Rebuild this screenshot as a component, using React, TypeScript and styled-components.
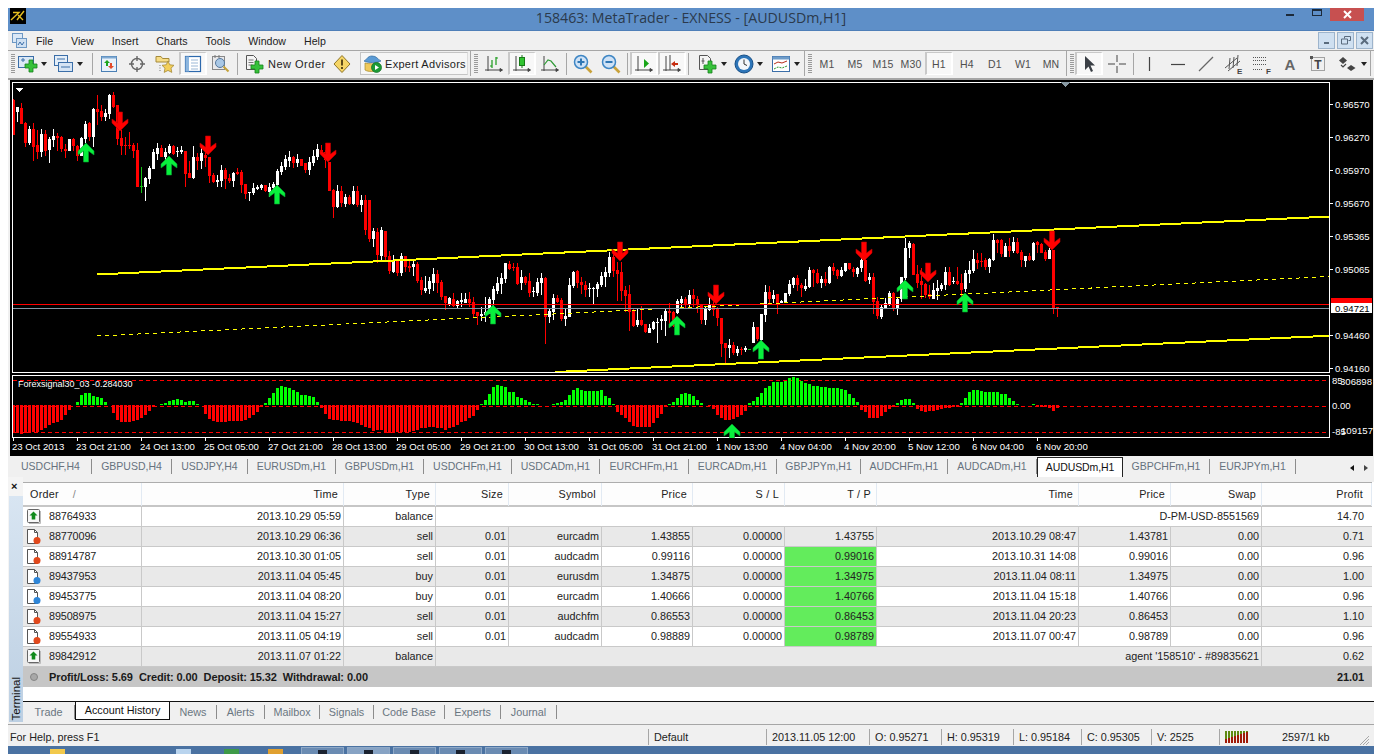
import { ReactNode } from 'react'
import styled, { createGlobalStyle } from 'styled-components'

const FONT = '"Liberation Sans", Arial, sans-serif'

const GlobalStyle = createGlobalStyle`
  html, body {
    margin: 0;
    padding: 0;
    background: #fff;
    overflow: hidden;
  }
  * {
    box-sizing: border-box;
  }
`

const Window = styled.div`
  width: 1366px;
  height: 746px;
  margin: 8px 0 0 8px;
  display: flex;
  flex-direction: column;
  background: #f0f0f0;
  font-family: ${FONT};
  font-size: 10.8px;
  color: #222;
  overflow: hidden;
`

const TitleBar = styled.div`
  height: 23px;
  flex: none;
  display: grid;
  grid-template-columns: 1fr auto 1fr;
  background: #5e8fc8;
  border-bottom: 1px solid #4f7fb8;
`

const TitleLogo = styled.svg`
  width: 16px;
  height: 16px;
  margin-left: 2px;
  display: block;
`

const TitleText = styled.div`
  font-family: 'Open Sans', sans-serif;
  font-size: 14.2px;
  line-height: 20px;
  color: #2b3a4c;
  white-space: nowrap;
`

const WindowButtons = styled.div`
  display: flex;
  justify-content: flex-end;
  padding-right: 10px;
`

const WindowButton = styled.div<{ $w: number; $close?: boolean }>`
  width: ${({ $w }) => $w}px;
  height: 13px;
  display: flex;
  align-items: center;
  justify-content: center;
  color: #fff;
  background: ${({ $close }) => ($close ? '#c75050' : 'transparent')};
`

const MinMark = styled.div`
  width: 8px;
  height: 2px;
  margin-top: 1px;
  background: #1c2a3a;
`

const MaxMark = styled.div`
  width: 10px;
  height: 7px;
  margin-top: -5px;
  border: 1px solid #1c2a3a;
  border-top-width: 2px;
`

const MenuBar = styled.div`
  height: 20px;
  flex: none;
  display: flex;
  align-items: center;
  padding-left: 4px;
  border-bottom: 1px solid #a6a6a6;
`

const MenuItem = styled.div`
  padding: 0 9px;
  font-size: 10.6px;
`

const MdiButtons = styled.div`
  display: flex;
  gap: 2px;
  margin-left: auto;
  padding-right: 1px;
`

const MdiButton = styled.div`
  width: 17px;
  height: 17px;
  display: flex;
  align-items: center;
  justify-content: center;
  background: #cfe0f1;
  border: 1px solid #9db4cc;
`

const Toolbar = styled.div`
  height: 29px;
  flex: none;
  display: flex;
  align-items: center;
  padding: 0 0 2px 3px;
  border-bottom: 2px solid #a6a6a6;
`

const Grip = styled.div<{ $ml?: number; $mr?: number }>`
  width: 4px;
  height: 20px;
  flex: none;
  margin: 0 ${({ $mr }) => $mr ?? 2}px 0 ${({ $ml }) => $ml ?? 3}px;
  background: repeating-linear-gradient(#9a9a9a 0 1px, transparent 1px 2px);
`

const ToolSep = styled.div`
  width: 1px;
  height: 22px;
  flex: none;
  margin: 0 2px;
  background: #a6a6a6;
`

const GroupEnd = styled.div<{ $ml?: number }>`
  width: 1px;
  height: 25px;
  flex: none;
  margin-left: ${({ $ml }) => $ml ?? 2}px;
  background: #a6a6a6;
`

const ToolButton = styled.div<{ $w?: number; $active?: boolean; $pl?: number; $ml?: number }>`
  width: ${({ $w }) => $w ?? 28}px;
  height: 23px;
  flex: none;
  display: flex;
  align-items: center;
  justify-content: ${({ $pl }) => ($pl === undefined ? 'center' : 'flex-start')};
  gap: 3px;
  padding-left: ${({ $pl }) => $pl ?? 0}px;
  margin-left: ${({ $ml }) => $ml ?? 0}px;
  color: #3a3a3a;
  background-clip: padding-box;
  background-color: ${({ $active }) => ($active ? '#f8f8f8' : 'transparent')};
  border-style: solid;
  border-width: ${({ $active }) => ($active ? '1px 2px' : '0')};
  border-color: ${({ $active }) => ($active ? '#c9c9c9 #fff #fff #c9c9c9' : 'transparent')};
`

const ToolLabel = styled.span<{ $spacing: number }>`
  font-size: 11px;
  letter-spacing: ${({ $spacing }) => $spacing}px;
  color: #1e1e1e;
  white-space: nowrap;
`

const BoxedButton = styled(ToolButton)`
  gap: 2px;
  background-color: #f6f6f6;
  border: 1px solid #c4c4c4;
  border-right-color: #dcdcdc;
`

const Timeframe = styled(ToolButton)`
  font-size: 10.5px;
  letter-spacing: 0.2px;
  color: #4f4f4f;
`

const Caret = styled.span`
  width: 0;
  height: 0;
  flex: none;
  border-left: 3.5px solid transparent;
  border-right: 3.5px solid transparent;
  border-top: 4px solid #222;
`

const Icon = styled.svg`
  width: 20px;
  height: 20px;
  flex: none;
  display: block;
  overflow: visible;
`

const ChartArea = styled.div`
  height: 376px;
  flex: none;
  padding-left: 2px;
  background: #f0f0f0;
`

const ChartSvg = styled.svg`
  display: block;
  width: 1363px;
  height: 376px;
  background: #000;
  shape-rendering: crispEdges;
`

const AxisText = styled.text<{ $size?: number; $dark?: boolean }>`
  font-family: ${FONT};
  font-size: ${({ $size }) => $size ?? 9.6}px;
  fill: ${({ $dark }) => ($dark ? '#000' : '#fff')};
  shape-rendering: auto;
`

const SymbolTabs = styled.div`
  height: 21px;
  flex: none;
  display: flex;
  align-items: flex-end;
  padding-left: 2px;
`

const SymbolTab = styled.div<{ $w: number; $active?: boolean }>`
  width: ${({ $w }) => $w}px;
  flex: none;
  height: ${({ $active }) => ($active ? 20 : 15)}px;
  margin-bottom: ${({ $active }) => ($active ? 0 : 3)}px;
  line-height: ${({ $active }) => ($active ? 18 : 15)}px;
  font-size: 10.5px;
  text-align: center;
  letter-spacing: ${({ $active }) => ($active ? '-0.1px' : '0')};
  color: ${({ $active }) => ($active ? '#111' : '#66727e')};
  background: ${({ $active }) => ($active ? '#fff' : 'transparent')};
  border: ${({ $active }) => ($active ? '1px solid #222' : 'none')};
  border-bottom: none;
  border-right: ${({ $active }) => ($active ? '1px solid #222' : '1px solid #8c8c8c')};
`

const ScrollArrows = styled.div`
  margin-left: auto;
  display: flex;
  gap: 10px;
  padding: 0 6px 6px 0;
  align-self: flex-end;
`

const ArrowMark = styled.span<{ $right?: boolean }>`
  width: 0;
  height: 0;
  border-top: 3.5px solid transparent;
  border-bottom: 3.5px solid transparent;
  border-left: ${({ $right }) => ($right ? '4px solid #444' : 'none')};
  border-right: ${({ $right }) => ($right ? 'none' : '4px solid #111')};
`

const Terminal = styled.div`
  flex: 1;
  min-height: 0;
  display: flex;
  background: #fff;
`

const TermSide = styled.div`
  width: 15px;
  flex: none;
  display: flex;
  flex-direction: column;
  background: #f4f4f4;
`

const TermClose = styled.div`
  height: 19px;
  flex: none;
  padding: 3px 0 0 3px;
  font-size: 11px;
  font-weight: bold;
  line-height: 12px;
  color: #111;
`

const TermStrip = styled.div`
  flex: 1;
  margin-left: 1px;
  display: flex;
  align-items: flex-end;
  justify-content: center;
  background: linear-gradient(#d8e5f2, #bccfe2);
`

const TermLabel = styled.div`
  writing-mode: vertical-rl;
  transform: rotate(180deg);
  font-size: 11.5px;
  line-height: 14px;
  padding-top: 2px;
  color: #111;
`

const TermMain = styled.div`
  flex: 1;
  min-width: 0;
  display: flex;
  flex-direction: column;
  padding-top: 5px;
  background: linear-gradient(#f0f0f0 0 5px, #fff 5px);
`

const COLUMNS = '119px 202px 92px 73px 93px 91px 92px 92px 202px 92px 91px 110px'

const HeaderRow = styled.div`
  height: 25px;
  width: 1349px;
  flex: none;
  display: grid;
  grid-template-columns: ${COLUMNS};
  background: #fdfdfd;
  border-top: 1px solid #adadad;
  border-bottom: 2px solid #c6c6c6;
`

const HeaderCell = styled.div<{ $last?: boolean }>`
  text-align: right;
  line-height: 23px;
  letter-spacing: 0.25px;
  padding-right: ${({ $last }) => ($last ? 8 : 5)}px;
  border-right: 1px solid #e2eaf3;
`

const HeaderOrder = styled(HeaderCell)`
  display: flex;
  gap: 14px;
  padding-left: 7px;
  text-align: left;
`

const SortMark = styled.span`
  color: #888;
`

const Row = styled.div<{ $alt?: boolean }>`
  height: 20px;
  width: 1349px;
  flex: none;
  display: grid;
  grid-template-columns: ${COLUMNS};
  background: ${({ $alt }) => ($alt ? '#e9e9e9' : '#fff')};
  border-bottom: 1px solid #c9c9c9;
`

const Cell = styled.div<{ $span?: number; $hit?: boolean; $last?: boolean }>`
  grid-column: span ${({ $span }) => $span ?? 1};
  text-align: right;
  line-height: 19px;
  white-space: nowrap;
  padding-right: ${({ $last }) => ($last ? 8 : 2)}px;
  background: ${({ $hit }) => ($hit ? '#63ec5c' : 'transparent')};
  border-right: ${({ $last }) => ($last ? 'none' : '1px solid #c9c9c9')};
`

const OrderCell = styled(Cell)`
  display: flex;
  align-items: center;
  gap: 8px;
  padding-left: 3px;
  letter-spacing: -0.1px;
`

const RowIcon = styled.svg`
  width: 15px;
  height: 17px;
  flex: none;
  display: block;
`

const Summary = styled.div`
  height: 20px;
  width: 1349px;
  flex: none;
  display: flex;
  align-items: center;
  padding: 0 8px 0 7px;
  background: #c6c6c6;
  font-size: 11px;
  font-weight: bold;
  color: #1a1a1a;
  letter-spacing: -0.1px;
`

const SummaryDot = styled.span`
  width: 8px;
  height: 8px;
  margin-right: 11px;
  border-radius: 50%;
  background: #a8a8a8;
  border: 1px solid #858585;
`

const SummaryItem = styled.span`
  margin-right: 6px;
`

const SummaryTotal = styled.span`
  margin-left: auto;
`

const Blank = styled.div`
  flex: 1;
  background: #fff;
`

const BottomTabs = styled.div`
  height: 21px;
  flex: none;
  display: flex;
  background: #f0f0f0;
  border-top: 1px solid #111;
`

const BottomTab = styled.div<{ $w: number; $active?: boolean }>`
  width: ${({ $w }) => $w}px;
  flex: none;
  height: ${({ $active }) => ($active ? 18 : 14)}px;
  margin-top: ${({ $active }) => ($active ? 0 : 3)}px;
  line-height: ${({ $active }) => ($active ? 16 : 14)}px;
  text-align: center;
  color: ${({ $active }) => ($active ? '#111' : '#6a7681')};
  background: ${({ $active }) => ($active ? '#fff' : 'transparent')};
  border-right: ${({ $active }) => ($active ? '1px solid #111' : '1px solid #8c8c8c')};
  border-left: ${({ $active }) => ($active ? '1px solid #111' : 'none')};
  border-bottom: ${({ $active }) => ($active ? '1px solid #111' : 'none')};
`

const StatusBar = styled.div`
  height: 22px;
  flex: none;
  margin-top: 2px;
  padding-top: 2px;
  display: flex;
  align-items: center;
  border-top: 1px solid #a6a6a6;
  color: #222;
`

const StatusCell = styled.div<{ $w: number; $sep?: boolean }>`
  width: ${({ $w }) => $w}px;
  flex: none;
  height: 16px;
  line-height: 16px;
  padding-left: ${({ $sep }) => ($sep ? 5 : 2)}px;
  white-space: nowrap;
  border-left: ${({ $sep }) => ($sep ? '1px solid #a6a6a6' : 'none')};
  display: flex;
  align-items: center;
`

const StatusBars = styled.svg`
  width: 25px;
  height: 12px;
  display: block;
`

const Resize = styled.svg`
  width: 12px;
  height: 12px;
  margin: 6px 4px 0 auto;
  display: block;
`

const Taskbar = styled.div`
  height: 8px;
  width: 1382px;
  flex: none;
  margin-left: -1px;
  display: flex;
  align-items: flex-end;
  background: #4a72a2;
`

const TaskIcon = styled.div<{ $color: string; $ml: number }>`
  width: 15px;
  height: 5px;
  margin-left: ${({ $ml }) => $ml}px;
  background: ${({ $color }) => $color};
`

const TaskButton = styled.div<{ $ml: number; $on?: boolean }>`
  width: 43px;
  height: 7px;
  margin-left: ${({ $ml }) => $ml}px;
  display: flex;
  justify-content: center;
  background: ${({ $on }) => ($on ? '#87a3c4' : '#6a8bb2')};
  border: 1px solid #8fa9c7;
  border-bottom: none;
`

const TaskThumb = styled.div`
  width: 9px;
  height: 4px;
  margin-top: 2px;
  background: #1a2230;
`

// chart data: values are read straight off the picture, y = base + v / 3

const rawA = `r 57 60 165 165
w 80 82 95 125
r 70 84 132 132
r 125 130 188 200
w 138 148 190 195
r 128 148 200 242
r 150 195 216 238
w 148 162 216 232
r 150 162 212 228
w 170 178 210 248
w 148 168 180 200
r 160 168 174 212
r 168 172 206 215
r 192 208 213 234
w 178 178 213 213
r 175 178 198 212
r 195 198 228 242
w 172 175 228 228
w 122 132 178 190
r 125 130 172 182
w 85 87 172 200
r 45 88 95 135
r 75 94 110 122
w 88 98 110 122
w 42 46 102 118
r 35 46 80 85
r 75 75 178 195
r 150 174 197 225
r 172 195 197 225
r 155 195 197 208
r 190 196 212 235
r 188 210 322 322
g 262 318 320 338
w 290 294 320 362
w 258 264 297 312
w 208 216 266 268
w 190 204 221 240
r 195 204 232 232
w 205 216 232 246
w 192 198 220 222
r 195 198 222 225
w 200 212 216 230
w 198 210 216 222
r 212 212 282 322
r 242 280 295 295
w 198 232 295 298
r 220 232 244 270
w 195 220 242 268
r 200 225 235 262
r 230 232 288 308
r 280 286 305 310
w 285 300 305 322
w 255 270 303 322
r 265 270 298 326
r 282 293 304 310
w 275 280 303 322
r 265 276 282 285
r 270 276 315 338
r 312 312 342 358
w 335 336 340 362
w 308 324 340 345
w 316 320 326 330
w 312 316 324 330
r 314 314 332 336
w 308 320 335 352
w 305 312 325 328
w 268 272 315 340
w 245 258 276 285
w 225 238 260 270
w 212 232 242 260
r 228 232 248 265
w 222 236 248 260
r 236 236 258 258
r 250 250 270 280
w 230 245 270 286
w 210 228 248 258
w 192 208 230 240
r 195 210 215 225
r 210 215 240 265
r 245 245 332 332
r 328 330 380 415
w 315 332 382 385
r 318 332 370 380
w 342 352 372 382
r 345 352 372 375
w 318 332 372 375
r 318 332 375 380
w 345 360 375 396
r 345 360 450 465`

const rawB = `r -60 -60 58 65
w 25 33 58 80
r 25 35 105 130
w 22 30 108 122
r 33 33 112 122
r 93 108 153 162
w 105 120 155 160
r 118 122 160 168
w 100 108 160 168
r 108 108 140 155
r 118 138 143 155
w 120 132 140 168
r 125 132 183 190
r 170 180 210 225
w 168 205 212 218
w 170 183 208 222
w 145 162 188 212
r 150 162 190 220
r 180 186 232 240
r 228 228 250 270
w 232 235 252 258
r 220 238 258 262
w 240 242 258 265
w 218 240 246 260
w 218 236 248 250
r 216 238 248 262
r 232 246 282 292
r 275 276 288 315
w 262 282 288 304
w 232 276 286 305
w 230 236 282 282
w 198 207 240 260
w 172 188 212 222
w 160 174 192 222
w 128 130 178 190
r 122 132 146 150
r 130 140 142 152
r 130 140 192 195
w 150 170 190 210
r 168 172 188 195
r 160 182 220 230
w 200 212 216 232
w 175 186 220 228
w 160 174 188 225
r 170 174 290 372
w 265 274 290 308
w 222 234 276 300
r 225 234 246 248
r 235 240 298 302
w 268 288 296 318
w 174 195 290 292
w 152 155 198 205
r 150 152 190 205
r 172 186 196 222
r 182 194 210 230
w 190 205 208 232
w 200 204 208 252
w 185 192 206 230
w 155 168 196 200
w 142 155 172 200
w 95 110 158 172
r 100 110 152 172
r 125 150 162 242
r 125 155 212 242
r 198 210 228 275
r 195 222 275 333
r 268 272 318 322
w 265 300 316 322
r 258 300 316 318
r 312 312 336 338
w 312 324 338 340
w 304 306 328 330
w 295 306 310 370
w 285 298 304 330
w 268 272 304 348
r 250 274 278 325
r 272 276 318 320
w 238 242 280 282
w 228 236 248 265
r 232 238 256 265
w 210 225 255 268
r 208 226 238 262
r 228 238 252 278`

const rawC = `r 254 254 300 312
w 258 266 300 315
w 225 252 270 272
r 240 252 270 288
r 262 266 295 318
r 294 294 372 410
r 368 370 384 435
w 358 375 384 415
r 365 376 400 405
w 378 386 400 408
r 380 386 390 405
w 378 383 390 395
g 388 388 389 389
w 305 322 368 370
r 320 320 358 362
w 282 282 360 362
w 196 216 285 305
r 198 216 238 250
w 210 226 238 250
r 222 222 248 282
w 240 242 248 250
w 218 220 248 250
w 180 192 222 228
w 170 174 196 205
r 165 174 196 212
r 190 196 205 230
w 178 198 206 212
w 142 150 202 205
r 148 150 160 200
r 148 160 190 192
w 168 176 190 205
r 155 178 190 198
w 138 140 190 192
r 128 142 154 165
r 148 150 168 178
w 140 150 168 172
w 128 130 154 155
r 128 130 148 150
r 140 148 156 170
w 142 144 162 172
w 105 120 145 155
r 70 120 184 186
w 160 172 180 192
r 160 170 246 282
r 232 244 288 298
w 252 260 290 296
w 235 250 264 264
w 212 220 256 258
r 215 218 268 272
w 235 238 268 285
w 170 170 238 245
w 55 85 174 180
w 62 70 85 115
r 70 72 165 165
r 135 162 190 205
r 145 182 195 236
r 190 192 226 235
r 195 222 232 238
w 188 210 236 238
w 180 204 214 240
w 190 194 206 212
w 140 156 196 210
r 140 156 196 198
w 170 184 186 192
r 140 184 192 196
r 162 190 210 236
w 150 160 208 216
w 124 150 162 190
w 90 118 152 158
r 100 120 128 146
r 100 122 126 140
r 115 120 140 150
w 115 118 142 158
w 42 60 120 122
r 58 60 70 100
r 58 60 102 112
w 70 78 110 112
r 55 78 94 110
w 50 66 94 100
r 55 66 100 102
r 90 96 120 142
w 108 108 122 140
r 100 108 120 122
w 65 68 120 122
r 62 66 74 100
r 70 72 98 100
r 90 96 118 122
w 85 90 116 118
r 90 90 264 282
r 260 262 264 292`

type Candle = { color: string; top: number; open: number; close: number; low: number }

const COLORS: Record<string, string> = { r: '#ff0000', w: '#ffffff', g: '#13c013' }

const parseCandles = (raw: string, base: number): Candle[] =>
  raw.split('\n').map((line) => {
    const [c, a, b, d, e] = line.trim().split(' ')
    const y = (v: string) => Math.round(base + Number(v) / 3)
    return { color: COLORS[c], top: y(a), open: y(b), close: y(d), low: y(e) }
  })

const CANDLES = [...parseCandles(rawA, 80), ...parseCandles(rawB, 220), ...parseCandles(rawC, 220)]

const HISTOGRAM = [
  -85, -85, -88, -85, -83, -80, -80, -75, -70, -60, -55, -50, -45, -30, -15, 0, 10, 30, 36, 35, 28, 25, 20, 10, 0, -25,
  -45, -52, -52, -50, -48, -45, -38, -30, -18, -5, 1, 3, 5, 12, 16, 18, 14, 10, 11, 11, 4, 0, -28, -42, -48, -52, -50,
  -50, -48, -48, -48, -48, -45, -40, -30, -20, -5, 6, 20, 36, 50, 56, 55, 50, 45, 38, 30, 30, 28, 25, 8, -10, -28, -42,
  -45, -45, -48, -48, -48, -50, -55, -60, -65, -70, -78, -75, -75, -80, -83, -80, -80, -80, -80, -82, -78, -75, -70,
  -70, -65, -65, -68, -70, -75, -70, -65, -60,
  -52, -48, -40, -32, -14, 2, 15, 32, 55, 60, 58, 55, 40, 38, 25, 22, 15, 8, 3, 2, 1, 1, 0, 2, 5, 10, 16, 30, 45, 50,
  46, 42, 42, 42, 42, 45, 28, 20, 4, -20, -30, -38, -50, -62, -65, -67, -67, -65, -55, -40, -28, -5, 4, 10, 22, 32, 35,
  34, 28, 15, 5, 0, -4, -12, -30, -38, -44, -44, -42, -35, -30, -18, 5, 12, 25, 36, 50, 58, 68, 68, 70, 72, 80, 83, 80,
  72, 66, 64, 58, 56, 54, 54, 52, 52, 52, 48, 45, 32, 22, 10, -15, -22, -38, -39, -39, -32, -22, -12, -5, 5, 15, 18, 18,
  5, -12, -18, -20, -18, -17, -15, -13, -10, -8, -7, -5, 5, 22, 40, 46, 44, 42, 40, 40, 38, 38, 32, 32, 22, 12, 3, 1,
  -1, 1, 2, -2, -5, -5, -8, -17, -8,
]

const DOWN_ARROWS = [
  [120, 112], [208, 136], [328, 143], [620, 242], [716, 285], [864, 242], [928, 263], [1052, 231],
]
const UP_ARROWS = [
  [86, 143], [169, 156], [277, 185], [493, 305], [677, 316], [761, 340], [905, 280], [965, 293],
]

const PRICES: [string, number][] = [
  ['0.96570', 108], ['0.96270', 141], ['0.95970', 174], ['0.95670', 207], ['0.95365', 240],
  ['0.95065', 273], ['0.94460', 339], ['0.94160', 372],
]

const TIMES = [
  '23 Oct 2013', '23 Oct 21:00', '24 Oct 13:00', '25 Oct 05:00', '27 Oct 21:00', '28 Oct 13:00',
  '29 Oct 05:00', '29 Oct 21:00', '30 Oct 13:00', '31 Oct 05:00', '31 Oct 21:00', '1 Nov 13:00',
  '4 Nov 04:00', '4 Nov 20:00', '5 Nov 12:00', '6 Nov 04:00', '6 Nov 20:00',
]

const SYMBOLS: [string, number][] = [
  ['USDCHF,H4', 82], ['GBPUSD,H4', 80], ['USDJPY,H4', 76], ['EURUSDm,H1', 88], ['GBPUSDm,H1', 88],
  ['USDCHFm,H1', 88], ['USDCADm,H1', 88], ['EURCHFm,H1', 89], ['EURCADm,H1', 88], ['GBPJPYm,H1', 84],
  ['AUDCHFm,H1', 87], ['AUDCADm,H1', 89], ['AUDUSDm,H1', 86], ['GBPCHFm,H1', 87], ['EURJPYm,H1', 86],
]

const TERMINAL_TABS: [string, number][] = [
  ['Trade', 52], ['Account History', 95], ['News', 47], ['Alerts', 48], ['Mailbox', 55], ['Signals', 54],
  ['Code Base', 71], ['Experts', 56], ['Journal', 56],
]

type Trade = string[]

const TRADES: Trade[] = [
  ['s', '88770096', '2013.10.29 06:36', 'sell', '0.01', 'eurcadm', '1.43855', '0.00000', '1.43755', '2013.10.29 08:47', '1.43781', '0.00', '0.71'],
  ['s', '88914787', '2013.10.30 01:05', 'sell', '0.01', 'audcadm', '0.99116', '0.00000', '0.99016', '2013.10.31 14:08', '0.99016', '0.00', '0.96'],
  ['b', '89437953', '2013.11.04 05:45', 'buy', '0.01', 'eurusdm', '1.34875', '0.00000', '1.34975', '2013.11.04 08:11', '1.34975', '0.00', '1.00'],
  ['b', '89453775', '2013.11.04 08:20', 'buy', '0.01', 'eurcadm', '1.40666', '0.00000', '1.40766', '2013.11.04 15:18', '1.40766', '0.00', '0.96'],
  ['s', '89508975', '2013.11.04 15:27', 'sell', '0.01', 'audchfm', '0.86553', '0.00000', '0.86453', '2013.11.04 20:23', '0.86453', '0.00', '1.10'],
  ['s', '89554933', '2013.11.05 04:19', 'sell', '0.01', 'audcadm', '0.98889', '0.00000', '0.98789', '2013.11.07 00:47', '0.98789', '0.00', '0.96'],
]

const HEADERS = ['Time', 'Type', 'Size', 'Symbol', 'Price', 'S / L', 'T / P', 'Time', 'Price', 'Swap', 'Profit']

// icons

const plus = (x: number, y: number) => (
  <path
    d={`M${x - 2} ${y - 6}h4v4h4v4h-4v4h-4v-4h-4v-4h4z`}
    fill="#36c13a"
    stroke="#17801c"
    strokeWidth="0.8"
  />
)

const axes = <path d="M4 2v15M1 16h17M16 14.5l2.5 1.5-2.5 1.5z" fill="#444" stroke="#444" strokeWidth="1" />

const NewChartIcon = () => (
  <Icon viewBox="0 0 20 20">
    <rect x="0.5" y="2.5" width="15" height="11" fill="#dbe8f6" stroke="#3b6ea8" />
    <path d="M3 6h4M5 4v4" stroke="#3b6ea8" />
    {plus(13, 12)}
  </Icon>
)

const ProfilesIcon = () => (
  <Icon viewBox="0 0 20 20">
    <rect x="0.5" y="1.5" width="13" height="10" fill="#e4eef8" stroke="#3b6ea8" />
    <rect x="4.5" y="8.5" width="14" height="9" fill="#d5e4f4" stroke="#3b6ea8" />
    <path d="M3 5h8M7 13h9" stroke="#3b6ea8" />
  </Icon>
)

const MarketWatchIcon = () => (
  <Icon viewBox="0 0 20 20">
    <rect x="2.5" y="2.5" width="15" height="15" fill="#e8f1fa" stroke="#4a7fb5" />
    <rect x="2.5" y="2.5" width="15" height="2" fill="#7fa9d2" />
    <path d="M8 6l3 3H9v3H7V9H5z" fill="#1da51d" />
    <path d="M12 15l-3-3h2V9h2v3h2z" fill="#e24a2a" />
  </Icon>
)

const NavigatorIcon = () => (
  <Icon viewBox="0 0 20 20">
    <circle cx="10" cy="10" r="5.5" fill="none" stroke="#666" strokeWidth="1.4" />
    <path d="M10 2v5M10 13v5M2 10h5M13 10h5" stroke="#666" strokeWidth="1.4" />
  </Icon>
)

const FavoritesIcon = () => (
  <Icon viewBox="0 0 20 20">
    <path d="M1 6V2.5h5l1.5 2H14V8H1z" fill="#f6dc86" stroke="#a58a3a" />
    <path d="M13 7l1.8 3.8 4.2.5-3 2.9.8 4.2L13 16.4l-3.8 2 .8-4.2-3-2.9 4.2-.5z" fill="#f3cf5a" stroke="#a58a3a" strokeWidth="0.8" />
    <path d="M5 11v6" stroke="#777" strokeDasharray="1 1.5" />
  </Icon>
)

const TerminalIcon = () => (
  <Icon viewBox="0 0 20 20">
    <rect x="2.5" y="2.5" width="15" height="15" fill="#fff" stroke="#2d69ad" strokeWidth="1.2" />
    <rect x="2.5" y="2.5" width="3.5" height="15" fill="#8db6de" />
    <path d="M8 6h7M8 9h7M8 12h7M8 15h7" stroke="#9ab7d6" />
  </Icon>
)

const TesterIcon = () => (
  <Icon viewBox="0 0 20 20">
    <rect x="1.5" y="2.5" width="12" height="13" fill="#e8e8ea" stroke="#888" />
    <circle cx="9" cy="9" r="4.5" fill="#a9c8e6" stroke="#56789c" />
    <path d="M12.5 12.5l5 5" stroke="#c4a23a" strokeWidth="2" />
    <path d="M4 1v3M8 1v3" stroke="#777" />
  </Icon>
)

const OrderIcon = () => (
  <Icon viewBox="0 0 20 20">
    <path d="M1.5 1.5h7l3 3v11h-10z" fill="#f4f4f4" stroke="#555" />
    <path d="M3.5 6h5M3.5 8.5h5M3.5 11h4" stroke="#777" />
    {plus(12, 13)}
  </Icon>
)

const WarningIcon = () => (
  <Icon viewBox="0 0 20 20">
    <path d="M10 1.5l8 8.5-8 8.5-8-8.5z" fill="#f5d566" stroke="#8f7628" />
    <path d="M10 5.5v6" stroke="#4b3a10" strokeWidth="1.8" />
    <path d="M10 13v2" stroke="#4b3a10" strokeWidth="1.8" />
  </Icon>
)

const AdvisorIcon = () => (
  <Icon viewBox="0 0 20 20">
    <path d="M1 7c3-1 3-5 8-5s5 3 9 5c-4 2-13 2-17 0z" fill="#5b9bd5" stroke="#2f6a9f" strokeWidth="0.7" />
    <path d="M2 9c4 1 9 1 13 0v7c-3 2-10 2-13 0z" fill="#efc95a" stroke="#a48a2c" strokeWidth="0.7" />
    <circle cx="13.5" cy="13.5" r="5" fill="#1c9a35" stroke="#0f6d22" strokeWidth="0.7" />
    <path d="M12 11l4 2.5-4 2.5z" fill="#fff" />
  </Icon>
)

const BarChartIcon = () => (
  <Icon viewBox="0 0 20 20">
    {axes}
    <path d="M8 6v8M8 12H6M12 3v8M12 4h2" stroke="#1a9a1a" strokeWidth="1.2" fill="none" />
  </Icon>
)

const CandleIcon = () => (
  <Icon viewBox="0 0 20 20">
    {axes}
    <path d="M10 1v13" stroke="#197a19" />
    <rect x="7.5" y="3.5" width="5" height="8" fill="#31c431" stroke="#197a19" />
  </Icon>
)

const LineChartIcon = () => (
  <Icon viewBox="0 0 20 20">
    {axes}
    <path d="M4 11l4-5 3 1 5 6" stroke="#2f9a36" strokeWidth="1.2" fill="none" />
  </Icon>
)

const ZoomIcon = ({ minus }: { minus?: boolean }) => (
  <Icon viewBox="0 0 20 20">
    <path d="M12.5 12.5l6 6" stroke="#c9a23a" strokeWidth="2.6" />
    <circle cx="8" cy="8" r="6.5" fill="#cfe2f6" stroke="#3e86c4" strokeWidth="1.5" />
    <path d={minus ? 'M4.5 8h7' : 'M4.5 8h7M8 4.5v7'} stroke="#2f77b4" strokeWidth="2" />
  </Icon>
)

const AutoScrollIcon = () => (
  <Icon viewBox="0 0 20 20">
    {axes}
    <path d="M10 5l5 4.5-5 4.5z" fill="#18a518" />
  </Icon>
)

const ShiftIcon = () => (
  <Icon viewBox="0 0 20 20">
    {axes}
    <path d="M8 1v15" stroke="#444" />
    <path d="M16 9h-3V7l-4 3 4 3v-2h3z" fill="#c62c10" />
  </Icon>
)

const IndicatorsIcon = () => (
  <Icon viewBox="0 0 20 20">
    <path d="M1.5 1.5h8l3 3v11h-11z" fill="#f4f4f4" stroke="#555" />
    <path d="M5 4v6M3.5 7h3" stroke="#555" />
    {plus(12, 13)}
  </Icon>
)

const ClockIcon = () => (
  <Icon viewBox="0 0 20 20">
    <circle cx="10" cy="10" r="9" fill="#2d75b8" stroke="#174f87" />
    <circle cx="10" cy="10" r="6" fill="#f2f6fa" />
    <path d="M10 5.5V10l3 1.5" stroke="#333" fill="none" />
  </Icon>
)

const TemplatesIcon = () => (
  <Icon viewBox="0 0 20 20">
    <rect x="1.5" y="2.5" width="17" height="15" fill="#fff" stroke="#3b6ea8" />
    <rect x="1.5" y="2.5" width="17" height="3" fill="#6e9cc9" />
    <path d="M3 10l4-2 4 1 5-2" stroke="#b5301a" fill="none" />
    <path d="M3 15l4-2 4 1 5-2" stroke="#2a9a2a" fill="none" strokeDasharray="2 1" />
  </Icon>
)

const CursorIcon = () => (
  <Icon viewBox="0 0 20 20">
    <path d="M6 2v14l3.5-3.5 2.5 5.5 2-1-2.5-5.5H16z" fill="#3a3f45" />
  </Icon>
)

const CrossIcon = () => (
  <Icon viewBox="0 0 20 20">
    <path d="M10 1v7M10 12v7M1 10h7M12 10h7" stroke="#444" />
  </Icon>
)

const VLineIcon = () => (
  <Icon viewBox="0 0 20 20">
    <path d="M9.5 3v14" stroke="#444" strokeWidth="1.2" />
  </Icon>
)

const HLineIcon = () => (
  <Icon viewBox="0 0 20 20">
    <path d="M3 10.5h14" stroke="#444" strokeWidth="1.2" />
  </Icon>
)

const TrendIcon = () => (
  <Icon viewBox="0 0 20 20">
    <path d="M3 17L17 3" stroke="#666" strokeWidth="1.3" />
  </Icon>
)

const ChannelIcon = () => (
  <Icon viewBox="0 0 20 20">
    <path d="M1 14L13 4M4 17L16 7M6 4l-1 11M10 3L9 14M14 1l-1 11" stroke="#555" strokeWidth="1" />
    <text x="13" y="20" fontFamily={FONT} fontSize="8" fontWeight="bold" fill="#444">E</text>
  </Icon>
)

const FiboIcon = () => (
  <Icon viewBox="0 0 20 20">
    <path d="M1 3.5h13M1 6.5h13M1 10.5h13M1 15.5h10" stroke="#555" strokeDasharray="1 1" />
    <text x="14" y="20" fontFamily={FONT} fontSize="8" fontWeight="bold" fill="#444">F</text>
  </Icon>
)

const TextIcon = () => (
  <Icon viewBox="0 0 20 20">
    <text x="10" y="15.5" textAnchor="middle" fontFamily={FONT} fontSize="15" fontWeight="bold" fill="#666">A</text>
  </Icon>
)

const LabelIcon = () => (
  <Icon viewBox="0 0 20 20">
    <rect x="3.5" y="3.5" width="13" height="13" fill="none" stroke="#555" strokeDasharray="1 1" />
    <rect x="2" y="2" width="3" height="3" fill="#555" />
    <text x="10" y="15" textAnchor="middle" fontFamily={FONT} fontSize="12" fontWeight="bold" fill="#444">T</text>
  </Icon>
)

const ArrowsIcon = () => (
  <Icon viewBox="0 0 20 20">
    <path d="M5 3l4 3.5-4 3.5-4-3.5z" fill="#444" />
    <path d="M3 11l2 2 3-3" stroke="#444" fill="none" strokeWidth="1.2" />
    <path d="M13 11l4.5 3-4.5 3-4-3z" fill="#444" />
  </Icon>
)

const BalanceIcon = () => (
  <RowIcon viewBox="0 0 15 17">
    <rect x="1.5" y="1.5" width="12" height="13" rx="1" fill="#f8f8f8" stroke="#666" />
    <path d="M14.5 3v12.5H3" stroke="#bbb" fill="none" />
    <path d="M7.5 3.5l4 4H9.3v4H5.7v-4H3.5z" fill="#118a1c" />
  </RowIcon>
)

const TradeIcon = ({ side }: { side: string }) => (
  <RowIcon viewBox="0 0 15 17">
    <path d="M1.5 1.5h7l3 3v11h-10z" fill="#fff" stroke="#555" />
    <path d="M8.5 1.5v3h3" fill="none" stroke="#555" />
    <circle cx="11" cy="12.5" r="3.5" fill={side === 's' ? '#e2491c' : '#2e86d8'} />
  </RowIcon>
)

const Arrow = ({ x, y, up }: { x: number; y: number; up?: boolean }) => {
  const points = '-2.5,0 2.5,0 2.5,11 8,7 8,11 0,19 -8,11 -8,7 -2.5,11'
  const transform = up ? `translate(${x} ${y + 19}) scale(1 -1)` : `translate(${x} ${y})`
  return (
    <polygon
      points={points}
      transform={transform}
      fill={up ? '#08f03c' : '#ff0000'}
      stroke={up ? '#07a030' : '#b80000'}
      strokeWidth="0.6"
      shapeRendering="auto"
    />
  )
}

const Chart = () => (
  <ChartSvg viewBox="10 80 1363 376">
    <defs>
      <clipPath id="main-clip">
        <rect x="13" y="83" width="1317" height="290" />
      </clipPath>
      <clipPath id="sub-clip">
        <rect x="13" y="376" width="1316" height="62" />
      </clipPath>
    </defs>

    <g clipPath="url(#main-clip)">
      {CANDLES.map((c, i) => {
        const x = 13 + i * 4
        return (
          <g key={i} fill={c.color}>
            <rect x={x} y={c.top} width="1" height={Math.max(1, c.low - c.top)} />
            <rect x={x - 1} y={c.open} width="3" height={Math.max(1, c.close - c.open)} />
          </g>
        )
      })}
      <line x1="97" y1="274.5" x2="1330" y2="216.5" stroke="#ffff00" strokeWidth="2" />
      <line x1="555" y1="372" x2="1330" y2="335.7" stroke="#ffff00" strokeWidth="2" />
      <line x1="97" y1="336" x2="1330" y2="276.5" stroke="#ffff00" strokeWidth="1" strokeDasharray="4 4" />
      <rect x="13" y="304" width="1317" height="1" fill="#ff0000" />
      <rect x="13" y="308" width="1317" height="1" fill="#8494a4" />
      {DOWN_ARROWS.map(([x, y]) => (
        <Arrow key={x} x={x} y={y} />
      ))}
      {UP_ARROWS.map(([x, y]) => (
        <Arrow key={x} x={x} y={y} up />
      ))}
    </g>

    <rect x="12.5" y="82.5" width="1317" height="290" fill="none" stroke="#fff" />
    <polygon points="16,88 23,88 19.5,92" fill="#fff" />
    <polygon points="1060,82 1070,82 1065,87" fill="#8899a3" />

    {PRICES.map(([label, y]) => (
      <g key={label}>
        <rect x="1330" y={y - 4} width="3" height="1" fill="#fff" />
        <AxisText x="1335" y={y}>{label}</AxisText>
      </g>
    ))}
    <rect x="1331" y="298" width="41" height="6" fill="#ff0000" />
    <rect x="1331" y="303" width="41" height="10" fill="#fff" />
    <AxisText x="1335" y="312" $dark>0.94721</AxisText>

    <rect x="12.5" y="375.5" width="1317" height="62" fill="none" stroke="#fff" />
    <g stroke="#ff0000" strokeDasharray="4 3">
      <line x1="13" y1="380.5" x2="1329" y2="380.5" />
      <line x1="13" y1="406.5" x2="1329" y2="406.5" />
      <line x1="13" y1="432.5" x2="1329" y2="432.5" />
    </g>
    <g clipPath="url(#sub-clip)">
      {HISTOGRAM.map((v, i) => {
        const h = Math.round(Math.abs(v) / 3)
        if (h === 0) return null
        return (
          <rect
            key={i}
            x={12 + i * 4}
            y={v > 0 ? 405 - h : 405}
            width="3"
            height={h}
            fill={v > 0 ? '#00ff00' : '#ff0000'}
          />
        )
      })}
      <Arrow x={732} y={424} up />
    </g>
    <AxisText x="18" y="387" $size={9}>Forexsignal30_03 -0.284030</AxisText>
    <AxisText x="1340" y="385">306898</AxisText>
    <AxisText x="1332" y="384">85</AxisText>
    <AxisText x="1332" y="409">0.00</AxisText>
    <AxisText x="1341" y="434">109157</AxisText>
    <AxisText x="1332" y="435">-85</AxisText>

    {TIMES.map((label, i) => {
      const x = 12 + i * 64
      return (
        <g key={label}>
          <rect x={x + 1} y="438" width="1" height="3" fill="#fff" />
          <AxisText x={x} y="450">{label}</AxisText>
        </g>
      )
    })}
  </ChartSvg>
)

const WithCaret = ({ children, w, pl }: { children: ReactNode; w: number; pl: number }) => (
  <ToolButton $w={w} $pl={pl}>
    {children}
    <Caret />
  </ToolButton>
)

export default function App() {
  return (
    <>
      <GlobalStyle />
      <Window>
        <TitleBar>
          <TitleLogo viewBox="0 0 16 16">
            <rect width="16" height="16" fill="#000" />
            <path d="M1 12L9 4.5H3M7 12L14 3M8 7l5 5" stroke="#e8c020" strokeWidth="1.4" fill="none" />
          </TitleLogo>
          <TitleText>158463: MetaTrader - EXNESS - [AUDUSDm,H1]</TitleText>
          <WindowButtons>
            <WindowButton $w={27}><MinMark /></WindowButton>
            <WindowButton $w={27}><MaxMark /></WindowButton>
            <WindowButton $w={34} $close>
              <svg width="9" height="9" viewBox="0 0 9 9">
                <path d="M1 1l7 7M8 1L1 8" stroke="#fff" strokeWidth="2" />
              </svg>
            </WindowButton>
          </WindowButtons>
        </TitleBar>

        <MenuBar>
          <svg width="15" height="15" viewBox="0 0 15 15">
            <rect x="0.5" y="0.5" width="10" height="9" fill="#dbe8f6" stroke="#6d98c4" />
            <rect x="4.5" y="5.5" width="10" height="9" fill="#cfe0f2" stroke="#6d98c4" />
            <path d="M6 12l2-3 2 3 2-3" stroke="#3b6ea8" fill="none" />
          </svg>
          <MenuItem>File</MenuItem>
          <MenuItem>View</MenuItem>
          <MenuItem>Insert</MenuItem>
          <MenuItem>Charts</MenuItem>
          <MenuItem>Tools</MenuItem>
          <MenuItem>Window</MenuItem>
          <MenuItem>Help</MenuItem>
          <MdiButtons>
            <MdiButton>
              <svg width="9" height="9" viewBox="0 0 9 9"><path d="M2 7h5" stroke="#5a6b7d" strokeWidth="2" /></svg>
            </MdiButton>
            <MdiButton>
              <svg width="10" height="10" viewBox="0 0 10 10">
                <path d="M3.5 2.5V.5h6v4h-2M.5 3h6v5h-6z" fill="none" stroke="#5a6b7d" />
              </svg>
            </MdiButton>
            <MdiButton>
              <svg width="9" height="9" viewBox="0 0 9 9"><path d="M1 1l7 7M8 1L1 8" stroke="#5a6b7d" strokeWidth="2" /></svg>
            </MdiButton>
          </MdiButtons>
        </MenuBar>

        <Toolbar>
          <Grip $ml={0} $mr={3} />
          <WithCaret w={35} pl={0}><NewChartIcon /></WithCaret>
          <WithCaret w={37} pl={1}><ProfilesIcon /></WithCaret>
          <ToolSep />
          <ToolButton><MarketWatchIcon /></ToolButton>
          <ToolButton><NavigatorIcon /></ToolButton>
          <ToolButton><FavoritesIcon /></ToolButton>
          <ToolButton $active><TerminalIcon /></ToolButton>
          <ToolButton><TesterIcon /></ToolButton>
          <ToolSep />
          <ToolButton $w={88} $pl={5}>
            <OrderIcon />
            <ToolLabel $spacing={0.5}>New Order</ToolLabel>
          </ToolButton>
          <ToolButton><WarningIcon /></ToolButton>
          <BoxedButton $w={108} $pl={2} $ml={4}>
            <AdvisorIcon />
            <ToolLabel $spacing={0.3}>Expert Advisors</ToolLabel>
          </BoxedButton>
          <GroupEnd />
          <Grip />
          <ToolButton><BarChartIcon /></ToolButton>
          <ToolButton $active><CandleIcon /></ToolButton>
          <ToolButton><LineChartIcon /></ToolButton>
          <ToolSep />
          <ToolButton><ZoomIcon /></ToolButton>
          <ToolButton><ZoomIcon minus /></ToolButton>
          <ToolSep />
          <ToolButton $active><AutoScrollIcon /></ToolButton>
          <ToolButton $active><ShiftIcon /></ToolButton>
          <ToolSep />
          <WithCaret w={41} pl={7}><IndicatorsIcon /></WithCaret>
          <WithCaret w={36} pl={2}><ClockIcon /></WithCaret>
          <WithCaret w={34} pl={3}><TemplatesIcon /></WithCaret>
          <GroupEnd />
          <Grip $mr={1} />
          {['M1', 'M5', 'M15', 'M30', 'H1', 'H4', 'D1', 'W1', 'MN'].map((tf) => (
            <Timeframe key={tf} $active={tf === 'H1'}>{tf}</Timeframe>
          ))}
          <GroupEnd $ml={1} />
          <Grip $mr={1} />
          <ToolButton $active><CursorIcon /></ToolButton>
          <ToolButton><CrossIcon /></ToolButton>
          <ToolSep />
          <ToolButton><VLineIcon /></ToolButton>
          <ToolButton><HLineIcon /></ToolButton>
          <ToolButton><TrendIcon /></ToolButton>
          <ToolButton><ChannelIcon /></ToolButton>
          <ToolButton><FiboIcon /></ToolButton>
          <ToolButton><TextIcon /></ToolButton>
          <ToolButton><LabelIcon /></ToolButton>
          <WithCaret w={37} pl={6}><ArrowsIcon /></WithCaret>
          <GroupEnd $ml={1} />
        </Toolbar>

        <ChartArea>
          <Chart />
        </ChartArea>

        <SymbolTabs>
          {SYMBOLS.map(([label, w]) => (
            <SymbolTab key={label} $w={w} $active={label === 'AUDUSDm,H1'}>{label}</SymbolTab>
          ))}
          <ScrollArrows>
            <ArrowMark />
            <ArrowMark $right />
          </ScrollArrows>
        </SymbolTabs>

        <Terminal>
          <TermSide>
            <TermClose>×</TermClose>
            <TermStrip>
              <TermLabel>Terminal</TermLabel>
            </TermStrip>
          </TermSide>
          <TermMain>
            <HeaderRow>
              <HeaderOrder>
                Order <SortMark>/</SortMark>
              </HeaderOrder>
              {HEADERS.map((h, i) => (
                <HeaderCell key={i} $last={i === HEADERS.length - 1}>{h}</HeaderCell>
              ))}
            </HeaderRow>

            <Row>
              <OrderCell><BalanceIcon />88764933</OrderCell>
              <Cell>2013.10.29 05:59</Cell>
              <Cell>balance</Cell>
              <Cell $span={8}>D-PM-USD-8551569</Cell>
              <Cell $last>14.70</Cell>
            </Row>
            {TRADES.map(([side, order, open, type, size, symbol, price, sl, tp, close, closePrice, swap, profit], i) => (
              <Row key={order} $alt={i % 2 === 0}>
                <OrderCell><TradeIcon side={side} />{order}</OrderCell>
                <Cell>{open}</Cell>
                <Cell>{type}</Cell>
                <Cell>{size}</Cell>
                <Cell>{symbol}</Cell>
                <Cell>{price}</Cell>
                <Cell>{sl}</Cell>
                <Cell $hit={i > 0}>{tp}</Cell>
                <Cell>{close}</Cell>
                <Cell>{closePrice}</Cell>
                <Cell>{swap}</Cell>
                <Cell $last>{profit}</Cell>
              </Row>
            ))}
            <Row $alt>
              <OrderCell><BalanceIcon />89842912</OrderCell>
              <Cell>2013.11.07 01:22</Cell>
              <Cell>balance</Cell>
              <Cell $span={8}>agent '158510' - #89835621</Cell>
              <Cell $last>0.62</Cell>
            </Row>

            <Summary>
              <SummaryDot />
              <SummaryItem>Profit/Loss: 5.69</SummaryItem>
              <SummaryItem>Credit: 0.00</SummaryItem>
              <SummaryItem>Deposit: 15.32</SummaryItem>
              <SummaryItem>Withdrawal: 0.00</SummaryItem>
              <SummaryTotal>21.01</SummaryTotal>
            </Summary>
            <Blank />
            <BottomTabs>
              {TERMINAL_TABS.map(([label, w]) => (
                <BottomTab key={label} $w={w} $active={label === 'Account History'}>{label}</BottomTab>
              ))}
            </BottomTabs>
          </TermMain>
        </Terminal>

        <StatusBar>
          <StatusCell $w={640}>For Help, press F1</StatusCell>
          <StatusCell $w={118} $sep>Default</StatusCell>
          <StatusCell $w={103} $sep>2013.11.05 12:00</StatusCell>
          <StatusCell $w={72} $sep>O: 0.95271</StatusCell>
          <StatusCell $w={72} $sep>H: 0.95319</StatusCell>
          <StatusCell $w={68} $sep>L: 0.95184</StatusCell>
          <StatusCell $w={70} $sep>C: 0.95305</StatusCell>
          <StatusCell $w={68} $sep>V: 2525</StatusCell>
          <StatusCell $w={61} $sep>
            <StatusBars viewBox="0 0 25 12">
              {[0, 1, 2, 3, 4, 5, 6, 7].map((n) => (
                <g key={n}>
                  <rect x={n * 3} y="0" width="2" height={8 - n} fill="#5f8a12" />
                  <rect x={n * 3} y={8 - n} width="2" height={4 + n} fill="#a01a08" />
                </g>
              ))}
            </StatusBars>
          </StatusCell>
          <StatusCell $w={60}>2597/1 kb</StatusCell>
          <Resize viewBox="0 0 12 12">
            <path d="M11 2L2 11M11 5l-6 6M11 8l-3 3" stroke="#a8a8a8" />
          </Resize>
        </StatusBar>

        <Taskbar>
          <TaskIcon $color="#f2c94c" $ml={43} />
          <TaskIcon $color="#b9d4ee" $ml={111} />
          <TaskIcon $color="#3e9a48" $ml={33} />
          <TaskIcon $color="#e0a030" $ml={29} />
          <TaskButton $ml={18}><TaskThumb /></TaskButton>
          <TaskButton $ml={3} $on><TaskThumb /></TaskButton>
          <TaskButton $ml={3}><TaskThumb /></TaskButton>
          <TaskButton $ml={3}><TaskThumb /></TaskButton>
          <TaskButton $ml={3}><TaskThumb /></TaskButton>
        </Taskbar>
      </Window>
    </>
  )
}
